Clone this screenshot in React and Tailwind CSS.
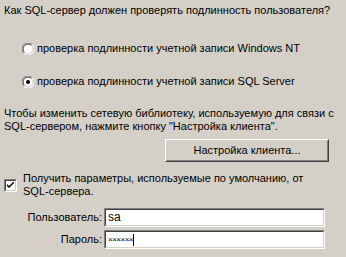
export default function App() {
  const font = { fontFamily: '"Liberation Sans", Arial, sans-serif' };
  return (
    <div className="w-[346px] h-[257px] bg-[#d4d0c8] text-black text-[11px] leading-[13px] overflow-hidden" style={font}>
      <div className="pl-[4px] pt-[4px]">Как SQL-сервер должен проверять подлинность пользователя?</div>

      <div className="flex items-center pl-[22px] mt-[25px] h-[13px]">
        <Radio checked={false} />
        <span className="ml-[3px]">проверка подлинности учетной записи Windows NT</span>
      </div>
      <div className="flex items-center pl-[22px] mt-[20px] h-[13px]">
        <Radio checked={true} />
        <span className="ml-[3px]">проверка подлинности учетной записи SQL Server</span>
      </div>

      <div className="pl-[4px] mt-[19px]">
        Чтобы изменить сетевую библиотеку, используемую для связи с<br />
        SQL-сервером, нажмите кнопку "Настройка клиента".
      </div>

      <div className="flex justify-end pr-[17px] mt-[6px]">
        <div className="w-[164px] h-[23px] border border-t-white border-l-white border-r-[#404040] border-b-[#404040]">
          <div className="w-full h-full flex items-center justify-center border border-t-[#d4d0c8] border-l-[#d4d0c8] border-r-[#808080] border-b-[#808080]">
            Настройка клиента...
          </div>
        </div>
      </div>

      <div className="flex items-center pl-[4px] mt-[10px]">
        <Checkbox />
        <div className="ml-[6px]">
          Получить параметры, используемые по умолчанию, от<br />SQL-сервера.
        </div>
      </div>

      <div className="flex items-center mt-[10px]">
        <div className="w-[104px] text-right pr-[2px]">Пользователь:</div>
        <Field>sa</Field>
      </div>
      <div className="flex items-center mt-[3px]">
        <div className="w-[104px] text-right pr-[2px]">Пароль:</div>
        <Field>
          <span className="text-[8px] leading-[8px] tracking-[-0.5px]">××××××</span>
          <span className="inline-block w-px h-[12px] bg-black" />
        </Field>
      </div>
    </div>
  );
}

function Radio({ checked }) {
  return (
    <div className="w-[12px] h-[12px] relative shrink-0">
      <svg width="12" height="12" viewBox="0 0 12 12" className="absolute inset-0">
        <circle cx="6" cy="6" r="5.5" fill="#ffffff" />
        <path d="M1.6 10.4 A5.5 5.5 0 0 1 10.4 1.6" stroke="#808080" strokeWidth="1" fill="none" />
        <path d="M2.5 9.5 A4.5 4.5 0 0 1 9.5 2.5" stroke="#404040" strokeWidth="1" fill="none" />
        <path d="M10.4 1.6 A5.5 5.5 0 0 1 1.6 10.4" stroke="#ffffff" strokeWidth="1" fill="none" />
        <path d="M9.5 2.5 A4.5 4.5 0 0 1 2.5 9.5" stroke="#d4d0c8" strokeWidth="1" fill="none" />
        {checked && <circle cx="6" cy="6" r="2" fill="#000" />}
      </svg>
    </div>
  );
}

function Checkbox() {
  return (
    <div className="w-[13px] h-[13px] shrink-0 border border-t-[#808080] border-l-[#808080] border-r-white border-b-white">
      <div className="w-full h-full bg-white border border-t-[#404040] border-l-[#404040] border-r-[#d4d0c8] border-b-[#d4d0c8] flex items-center justify-center">
        <svg width="7" height="7" viewBox="0 0 7 7">
          <path d="M0 2 L0 4 L2 6 L7 1 L7 -1 L2 4 Z" fill="#000" />
        </svg>
      </div>
    </div>
  );
}

function Field({ children }) {
  return (
    <div className="w-[221px] h-[19px] border border-t-[#808080] border-l-[#808080] border-r-white border-b-white">
      <div className="w-full h-full bg-white border border-t-[#404040] border-l-[#404040] border-r-[#d4d0c8] border-b-[#d4d0c8] flex items-center pl-[2px] text-[12px]">
        {children}
      </div>
    </div>
  );
}
